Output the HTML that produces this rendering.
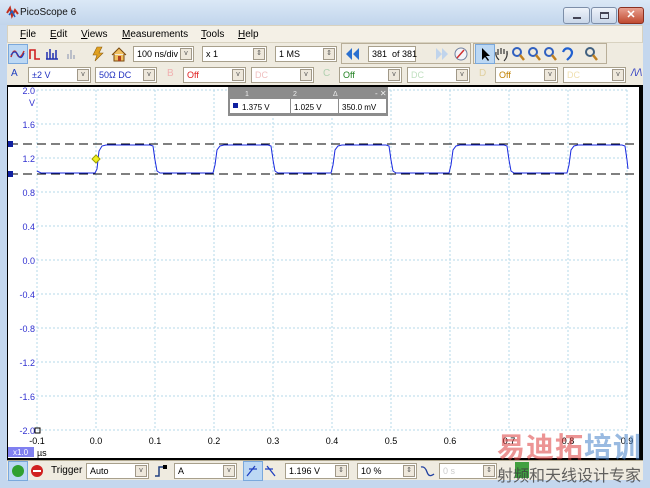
<!DOCTYPE html>
<html><head><meta charset="utf-8"><style>
*{margin:0;padding:0;box-sizing:border-box}
body{width:650px;height:488px;overflow:hidden;background:#c4d7ee;font-family:"Liberation Sans","Noto Sans CJK SC",sans-serif;font-size:9px;position:relative;color:#000}
.a{position:absolute}
.title{left:0;top:0;width:650px;height:25px;background:linear-gradient(#dbe8f6,#c2d5ec)}
.menu{left:7px;top:25px;width:636px;height:18px;background:#f4f0e6;border:1px solid #d8d2c0}
.menu span{position:absolute;top:3px;font-size:10px}
.tb{left:7px;top:43px;width:636px;height:22px;background:#efebe0}
.cb{left:7px;top:65px;width:636px;height:20px;background:#efebe0}
.bb{left:7px;top:460px;width:636px;height:20px;background:#efebe0;border-top:1px solid #b0a890}
.box{position:absolute;background:#fff;border:1px solid #a8a08c;height:16px;font-size:9px;padding:2px 3px;white-space:nowrap}
.dd{position:absolute;right:1px;top:1px;width:12px;height:12px;border:1px solid #a09888;background:#eee8dc;font-size:7px;text-align:center;line-height:10px;color:#555}
.grp{position:absolute;border:1px solid #b8ae98;height:21px}
.btn{position:absolute;width:20px;height:20px}
.wb{position:absolute;top:7px;height:17px;border:1px solid #7d8ea8;border-radius:3px;background:linear-gradient(#eef3fa,#c9d6e8)}
</style></head><body>
<div class="a title">
 <svg class="a" style="left:6px;top:5px" width="14" height="14"><path d="M1 8 L4 3 L6 11 L9 5 L12 9" stroke="#c03020" stroke-width="2" fill="none"/><path d="M3 10 L6 6 L9 12" stroke="#2060c0" stroke-width="1.5" fill="none"/></svg>
 <div class="a" style="left:20px;top:7px;font-size:10px;color:#111">PicoScope 6</div>
 <div class="wb" style="left:563px;width:27px"><div class="a" style="left:9px;top:9px;width:8px;height:2px;background:#445"></div></div>
 <div class="wb" style="left:591px;width:26px"><div class="a" style="left:8px;top:4px;width:9px;height:7px;border:1px solid #445;border-top-width:2px"></div></div>
 <div class="wb" style="left:618px;width:26px;background:linear-gradient(#e8a090,#c04a30);border-color:#8a3020;color:#fff;font-weight:bold;text-align:center;font-size:11px;line-height:15px">✕</div>
</div>
<div class="a" style="left:0;top:25px;width:7px;height:463px;background:#c4d7ee"></div>
<div class="a menu">
 <span style="left:12px"><u>F</u>ile</span><span style="left:42px"><u>E</u>dit</span><span style="left:73px"><u>V</u>iews</span><span style="left:114px"><u>M</u>easurements</span><span style="left:193px"><u>T</u>ools</span><span style="left:230px"><u>H</u>elp</span>
</div>
<div class="a tb">
 <div class="btn" style="left:1px;top:1px;background:#bcd8f4;border:1px solid #7aa8dc"></div>
 <svg class="a" style="left:3px;top:4px" width="120" height="14">
  <path d="M1 10 Q4 0 7 7 T14 4" stroke="#c03030" stroke-width="1.5" fill="none"/><path d="M1 8 Q5 2 8 8 T14 6" stroke="#2040c0" stroke-width="1.2" fill="none"/>
  <path d="M20 12 L20 3 L25 3 L25 12 L30 12" stroke="#d02020" stroke-width="1.6" fill="none"/>
  <path d="M36 12 H48 M37 12 V5 M40 12 V2 M43 12 V6 M46 12 V3" stroke="#2030b0" stroke-width="1.5"/>
  <path d="M58 12 V7 M61 12 V3 M64 12 V8" stroke="#a8b0c0" stroke-width="1.5"/>
 </svg>
 <svg class="a" style="left:84px;top:3px" width="40" height="16"><path d="M6 1 L11 1 L8 7 L12 7 L4 15 L6 9 L2 9 Z" fill="#e0a020" stroke="#906010" stroke-width=".6"/><path d="M21 9 L28 2 L35 9 M23 8 V15 H33 V8" stroke="#7a4a10" fill="#f0c060" stroke-width="1"/><rect x="27" y="10" width="3" height="5" fill="#b04020"/></svg>
 <div class="box" style="left:126px;top:3px;width:61px">100 ns/div<div class="dd">v</div></div>
 <div class="box" style="left:195px;top:3px;width:65px">x 1<div class="dd">⇕</div></div>
 <div class="box" style="left:268px;top:3px;width:62px">1 MS<div class="dd">⇕</div></div>
 <div class="grp" style="left:334px;top:0;width:130px"></div>
 <svg class="a" style="left:338px;top:4px" width="16" height="14"><path d="M7 1 L1 7 L7 13 Z M14 1 L8 7 L14 13 Z" fill="#2a70d0"/></svg>
 <div class="box" style="left:361px;top:3px;width:48px;text-align:center">381 &nbsp;of 381</div>
 <svg class="a" style="left:428px;top:4px" width="34" height="14"><path d="M1 1 L7 7 L1 13 Z M7 1 L13 7 L7 13 Z" fill="#c0d4ec"/><circle cx="26" cy="7" r="6" fill="#f4f4f8" stroke="#7080a0"/><path d="M22 11 L29 3" stroke="#d03030" stroke-width="1.5"/></svg>
 <div class="grp" style="left:466px;top:0;width:134px"></div>
 <div class="btn" style="left:468px;top:1px;background:#bcd8f4;border:1px solid #7aa8dc"></div>
 <svg class="a" style="left:470px;top:3px" width="128" height="16">
  <path d="M5 2 L5 14 L8 11 L11 15 L12 14 L9 10 L13 10 Z" fill="#000"/>
  <path d="M22 14 Q18 10 19 6 M21 9 V3 M24 8 V2 M27 8 V3 M30 9 V5 Q31 11 27 15" stroke="#333" fill="none" stroke-width="1.2"/>
  <g fill="none" stroke="#3060c0" stroke-width="2"><circle cx="40" cy="6" r="4"/><circle cx="56" cy="6" r="4"/><circle cx="72" cy="6" r="4"/></g>
  <path d="M43 9 L47 14 M59 9 L63 14 M75 9 L79 14" stroke="#c08020" stroke-width="2.5"/>
  <path d="M86 6 Q88 1 93 3 Q97 6 93 11 L90 14" stroke="#2060d0" stroke-width="2.2" fill="none"/>
  <circle cx="113" cy="6" r="4" fill="none" stroke="#406080" stroke-width="2"/><path d="M116 9 L120 14" stroke="#c08020" stroke-width="2.5"/>
 </svg>
</div>
<div class="a cb">
 <div class="a" style="left:4px;top:3px;color:#2040c0;font-size:10px">A</div>
 <div class="box" style="left:21px;top:2px;width:63px;color:#2030c0">±2 V<div class="dd">v</div></div>
 <div class="box" style="left:88px;top:2px;width:62px;color:#2030c0">50Ω DC<div class="dd">v</div></div>
 <div class="a" style="left:160px;top:3px;color:#f0b0b0;font-size:10px">B</div>
 <div class="box" style="left:176px;top:2px;width:63px;color:#e02020">Off<div class="dd">v</div></div>
 <div class="box" style="left:244px;top:2px;width:63px;color:#f0c0c0">DC<div class="dd">v</div></div>
 <div class="a" style="left:316px;top:3px;color:#b0d0b0;font-size:10px">C</div>
 <div class="box" style="left:332px;top:2px;width:63px;color:#208020">Off<div class="dd">v</div></div>
 <div class="box" style="left:400px;top:2px;width:63px;color:#c0e0c0">DC<div class="dd">v</div></div>
 <div class="a" style="left:472px;top:3px;color:#e0d0a0;font-size:10px">D</div>
 <div class="box" style="left:488px;top:2px;width:63px;color:#c08000">Off<div class="dd">v</div></div>
 <div class="box" style="left:556px;top:2px;width:63px;color:#f0e0b0">DC<div class="dd">v</div></div>
 <div class="a" style="left:624px;top:3px;color:#2030c0;font-size:10px;font-style:italic">/\/\</div>
</div>
<svg class="a" style="left:7px;top:85px" width="636" height="375" font-family="Liberation Sans" font-size="9">
 <rect x="0" y="0" width="636" height="375" fill="#000"/>
 <rect x="1" y="2" width="631" height="371" fill="#fff"/>
 <g stroke="#b4d8ea" stroke-dasharray="2,2" stroke-width="1">
  <path d="M30 5 V345 M89 5 V345 M148 5 V345 M207 5 V345 M266 5 V345 M325 5 V345 M384 5 V345 M443 5 V345 M502 5 V345 M561 5 V345 M620 5 V345"/>
  <path d="M30 5 H620 M30 39 H620 M30 73 H620 M30 107 H620 M30 141 H620 M30 175 H620 M30 209 H620 M30 243 H620 M30 277 H620 M30 311 H620 M30 345 H620"/>
 </g>
 <g fill="#3030d0" text-anchor="end">
  <text x="28" y="9">2.0</text><text x="28" y="21">V</text><text x="28" y="43">1.6</text><text x="28" y="77">1.2</text><text x="28" y="111">0.8</text><text x="28" y="145">0.4</text><text x="28" y="179">0.0</text><text x="28" y="213">-0.4</text><text x="28" y="247">-0.8</text><text x="28" y="281">-1.2</text><text x="28" y="315">-1.6</text><text x="28" y="349">-2.0</text>
 </g>
 <g fill="#000" text-anchor="middle">
  <text x="30" y="359">-0.1</text><text x="89" y="359">0.0</text><text x="148" y="359">0.1</text><text x="207" y="359">0.2</text><text x="266" y="359">0.3</text><text x="325" y="359">0.4</text><text x="384" y="359">0.5</text><text x="443" y="359">0.6</text><text x="502" y="359">0.7</text><text x="561" y="359">0.8</text><text x="620" y="359">0.9</text>
 </g>
 <rect x="28" y="343" width="5" height="5" fill="none" stroke="#000"/>
 <rect x="1" y="362" width="26" height="10" fill="#8080f0"/><text x="6" y="370" fill="#fff" font-size="8">x1.0</text><text x="30" y="371">µs</text>
 <path d="M2 59 H632 M2 89 H632" stroke="#000" stroke-dasharray="9,5"/>
 <rect x="1" y="56" width="5" height="6" fill="#1020a0"/><rect x="1" y="86" width="5" height="6" fill="#1020a0"/>
 <path fill="none" stroke="#1a2ae0" stroke-width="1" d="M30 86 L34 88 L88 88 L90 84 L92 66 L95 61 L99 60 L143 60 L146 61 L148 75 L150 86 L153 88 L206 88 L208 80 L210 65 L213 61 L217 60 L261 60 L264 61 L266 75 L268 86 L271 88 L324 88 L326 80 L328 65 L331 61 L335 60 L379 60 L382 61 L384 75 L386 86 L389 88 L442 88 L444 80 L446 65 L449 61 L453 60 L497 60 L500 61 L502 75 L504 86 L507 88 L560 88 L562 80 L564 65 L567 61 L571 60 L615 60 L618 61 L620 75 L621 84"/>
 <path d="M89 70 L93 74 L89 78 L85 74 Z" fill="#f0f020" stroke="#a0a000"/>
 <rect x="221" y="2" width="160" height="29" fill="#8c8c8c"/>
 <text x="238" y="11" fill="#eee" font-size="7">1</text><text x="286" y="11" fill="#eee" font-size="7">2</text><text x="326" y="11" fill="#eee" font-size="7">Δ</text><text x="368" y="11" fill="#eee" font-size="8">- ✕</text>
 <rect x="223" y="14" width="60" height="14" fill="#fff"/><rect x="284" y="14" width="47" height="14" fill="#fff"/><rect x="332" y="14" width="47" height="14" fill="#fff"/>
 <rect x="226" y="18" width="5" height="5" fill="#1020a0"/>
 <text x="235" y="25" font-size="8">1.375 V</text><text x="287" y="25" font-size="8">1.025 V</text><text x="335" y="25" font-size="8">350.0 mV</text>
</svg>
<div class="a bb">
 <div class="btn" style="left:1px;top:0;background:#bcd8f4;border:1px solid #7aa8dc"></div>
 <svg class="a" style="left:3px;top:2px" width="40" height="16"><circle cx="8" cy="8" r="6" fill="#30a030"/><circle cx="27" cy="8" r="6" fill="#d02020"/><rect x="23" y="7" width="8" height="2" fill="#fff"/></svg>
 <div class="a" style="left:44px;top:4px;font-size:10px">Trigger</div>
 <div class="box" style="left:79px;top:2px;width:63px">Auto<div class="dd">v</div></div>
 <svg class="a" style="left:147px;top:3px" width="14" height="14"><path d="M1 12 H5 V3 H11" stroke="#204080" stroke-width="1.5" fill="none"/><rect x="9" y="1" width="4" height="4" fill="#000"/></svg>
 <div class="box" style="left:167px;top:2px;width:63px">A<div class="dd">v</div></div>
 <div class="btn" style="left:236px;top:0;background:#bcd8f4;border:1px solid #7aa8dc"></div>
 <svg class="a" style="left:238px;top:3px" width="36" height="14"><path d="M2 12 L10 2 M4 5 H12" stroke="#2040c0" stroke-width="1.3"/><path d="M22 2 L30 12 M20 5 H28" stroke="#2040c0" stroke-width="1.3"/></svg>
 <div class="box" style="left:278px;top:2px;width:64px">1.196 V<div class="dd">⇕</div></div>
 <div class="box" style="left:350px;top:2px;width:60px">10 %<div class="dd">⇕</div></div>
 <svg class="a" style="left:413px;top:3px" width="16" height="14"><path d="M1 3 Q5 2 7 8 T14 10" stroke="#2040a0" stroke-width="1.3" fill="none"/></svg>
 <div class="box" style="left:432px;top:2px;width:58px;color:#ccc">0 s<div class="dd">⇕</div></div>
 <div class="a" style="left:508px;top:1px;width:14px;height:16px;background:#40a040"></div>
</div>
<div class="a" style="left:497px;top:432px;font-size:28px;line-height:32px;font-weight:bold;color:rgba(220,60,60,.55);letter-spacing:1px;white-space:nowrap">易迪拓<span style="color:rgba(70,130,200,.55)">培训</span></div>
<div class="a" style="left:497px;top:467px;font-size:16px;line-height:20px;color:rgba(60,60,60,.8);white-space:nowrap">射频和天线设计专家</div>
</body></html>
